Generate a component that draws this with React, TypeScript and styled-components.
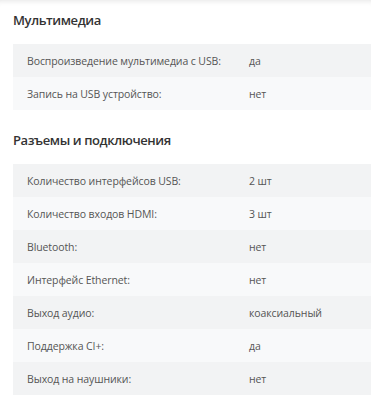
import React from 'react';
import styled, { createGlobalStyle } from 'styled-components';

const GlobalStyle = createGlobalStyle`
  html, body {
    margin: 0;
    padding: 0;
    background: #fff;
  }
  body {
    font-family: 'Open Sans', 'Noto Sans', sans-serif;
  }
`;

type Spec = { name: string; value: string };

const sections: { title: string; rows: Spec[] }[] = [
  {
    title: 'Мультимедиа',
    rows: [
      { name: 'Воспроизведение мультимедиа с USB:', value: 'да' },
      { name: 'Запись на USB устройство:', value: 'нет' },
    ],
  },
  {
    title: 'Разъемы и подключения',
    rows: [
      { name: 'Количество интерфейсов USB:', value: '2 шт' },
      { name: 'Количество входов HDMI:', value: '3 шт' },
      { name: 'Bluetooth:', value: 'нет' },
      { name: 'Интерфейс Ethernet:', value: 'нет' },
      { name: 'Выход аудио:', value: 'коаксиальный' },
      { name: 'Поддержка CI+:', value: 'да' },
      { name: 'Выход на наушники:', value: 'нет' },
    ],
  },
];

const App = () => {
  return (
    <>
      <GlobalStyle />
      <Page>
        {sections.map((s) => (
          <Section key={s.title}>
            <Title>{s.title}</Title>
            <Table>
              {s.rows.map((r) => (
                <Row key={r.name}>
                  <Name>{r.name}</Name>
                  <Value>{r.value}</Value>
                </Row>
              ))}
            </Table>
          </Section>
        ))}
      </Page>
    </>
  );
};

export default App;

const Page = styled.div`
  width: 371px;
  height: 400px;
  overflow: hidden;
  padding: 9px 0 0 13px;
  box-sizing: border-box;
  box-shadow: inset 0 6px 6px -6px rgba(0, 0, 0, 0.14);
`;

const Section = styled.div`
  display: flex;
  flex-direction: column;
  margin-bottom: 19px;
`;

const Title = styled.h2`
  margin: 0;
  height: 22px;
  line-height: 22px;
  font-size: 13px;
  font-weight: 600;
  letter-spacing: -0.4px;
  color: #333;
`;

const Table = styled.div`
  margin-top: 13px;
  display: flex;
  flex-direction: column;
`;

const Row = styled.div`
  display: grid;
  grid-template-columns: 222px 1fr;
  align-items: center;
  height: 33px;
  padding-left: 14px;
  font-size: 10.5px;
  letter-spacing: -0.1px;
  color: #555;
  background: #f2f3f4;

  &:nth-child(even) {
    background: #f8f9fa;
  }
`;

const Name = styled.span`
  white-space: nowrap;
`;

const Value = styled.span`
  white-space: nowrap;
`;
